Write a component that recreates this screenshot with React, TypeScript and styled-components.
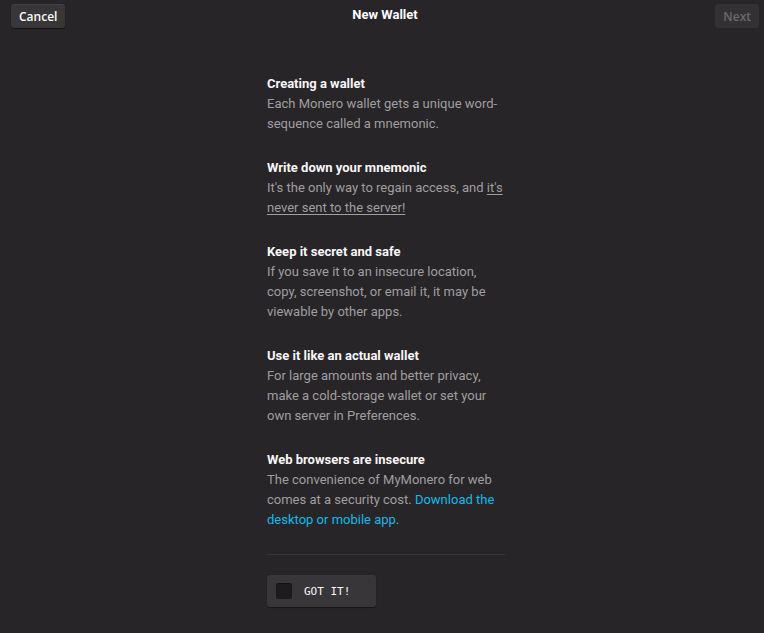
import React, { useState } from "react";
import styled, { createGlobalStyle } from "styled-components";

const Global = createGlobalStyle`
  html, body {
    margin: 0;
    padding: 0;
    background: #272527;
  }
  body {
    font-family: Roboto, "Open Sans", sans-serif;
    -webkit-font-smoothing: antialiased;
  }
`;

const Page = styled.div`
  min-height: 633px;
  background: #272527;
  display: flex;
  flex-direction: column;
`;

const NavBar = styled.header`
  display: grid;
  grid-template-columns: 1fr auto 1fr;
  align-items: start;
  padding: 4px 5px 0 11px;
  height: 74px;
  box-sizing: border-box;
`;

const NavButton = styled.button<{ $disabled?: boolean }>`
  justify-self: ${(p) => (p.$disabled ? "end" : "start")};
  height: 24px;
  padding: 0 8px;
  border: none;
  border-radius: 3px;
  background: ${(p) => (p.$disabled ? "#333133" : "#383638")};
  color: ${(p) => (p.$disabled ? "#6b696b" : "#fcfbfc")};
  font-family: "Open Sans", "Noto Sans", sans-serif;
  font-size: 12px;
  font-weight: 600;
  box-shadow: ${(p) => (p.$disabled ? "none" : "0 0.5px 1px rgba(0,0,0,0.5), inset 0 0.5px 0 rgba(255,255,255,0.1)")};
  cursor: ${(p) => (p.$disabled ? "default" : "pointer")};
`;

const Title = styled.h1`
  margin: 0;
  padding-top: 1px;
  font-size: 13px;
  font-weight: 700;
  color: #fcfbfc;
  line-height: 20px;
`;

const Body = styled.main`
  display: flex;
  justify-content: center;
  padding-left: 8px;
`;

const Column = styled.div`
  width: 238px;
  display: flex;
  flex-direction: column;
`;

const Block = styled.section`
  margin-bottom: 24px;
  font-size: 13px;
  line-height: 20px;
`;

const Heading = styled.h2`
  margin: 0;
  font-size: 13px;
  font-weight: 700;
  line-height: 20px;
  color: #f8f6f8;
`;

const Text = styled.p`
  margin: 0;
  color: #a09ea0;
  font-size: 13px;
  line-height: 20px;
`;

const Underlined = styled.span`
  text-decoration: underline;
  text-underline-offset: 2px;
`;

const Link = styled.a`
  color: #11bbec;
  text-decoration: none;
  cursor: pointer;
`;

const Rule = styled.hr`
  margin: 0 0 20px 0;
  border: none;
  height: 1px;
  background: #383638;
`;

const Confirm = styled.label`
  display: flex;
  align-items: center;
  gap: 12px;
  width: 109px;
  height: 32px;
  box-sizing: border-box;
  padding-left: 9px;
  background: #383638;
  border-radius: 3px;
  box-shadow: 0 0.5px 1px rgba(0, 0, 0, 0.4);
  cursor: pointer;
`;

const Box = styled.span<{ $checked: boolean }>`
  width: 16px;
  height: 16px;
  border-radius: 3px;
  background: ${(p) => (p.$checked ? "#00c6ff" : "#1d1b1d")};
  box-shadow: inset 0 0.5px 1px rgba(0, 0, 0, 0.6);
`;

const ConfirmText = styled.span`
  font-family: "DejaVu Sans Mono", "Liberation Mono", monospace;
  font-size: 11px;
  color: #f8f6f8;
`;

const sections = [
  {
    title: "Creating a wallet",
    body: <>Each Monero wallet gets a unique word-sequence called a mnemonic.</>,
  },
  {
    title: "Write down your mnemonic",
    body: (
      <>
        It's the only way to regain access, and{" "}
        <Underlined>it's never sent to the server!</Underlined>
      </>
    ),
  },
  {
    title: "Keep it secret and safe",
    body: <>If you save it to an insecure location, copy, screenshot, or email it, it may be viewable by other apps.</>,
  },
  {
    title: "Use it like an actual wallet",
    body: <>For large amounts and better privacy, make a cold-storage wallet or set your own server in Preferences.</>,
  },
  {
    title: "Web browsers are insecure",
    body: (
      <>
        The convenience of MyMonero for web comes at a security cost.{" "}
        <Link>Download the desktop or mobile app</Link>.
      </>
    ),
  },
];

export default function App() {
  const [checked, setChecked] = useState(false);
  return (
    <Page>
      <Global />
      <NavBar>
        <NavButton>Cancel</NavButton>
        <Title>New Wallet</Title>
        <NavButton $disabled disabled>
          Next
        </NavButton>
      </NavBar>
      <Body>
        <Column>
          {sections.map((s) => (
            <Block key={s.title}>
              <Heading>{s.title}</Heading>
              <Text>{s.body}</Text>
            </Block>
          ))}
          <Rule />
          <Confirm onClick={() => setChecked((c) => !c)}>
            <Box $checked={checked} />
            <ConfirmText>GOT IT!</ConfirmText>
          </Confirm>
        </Column>
      </Body>
    </Page>
  );
}
